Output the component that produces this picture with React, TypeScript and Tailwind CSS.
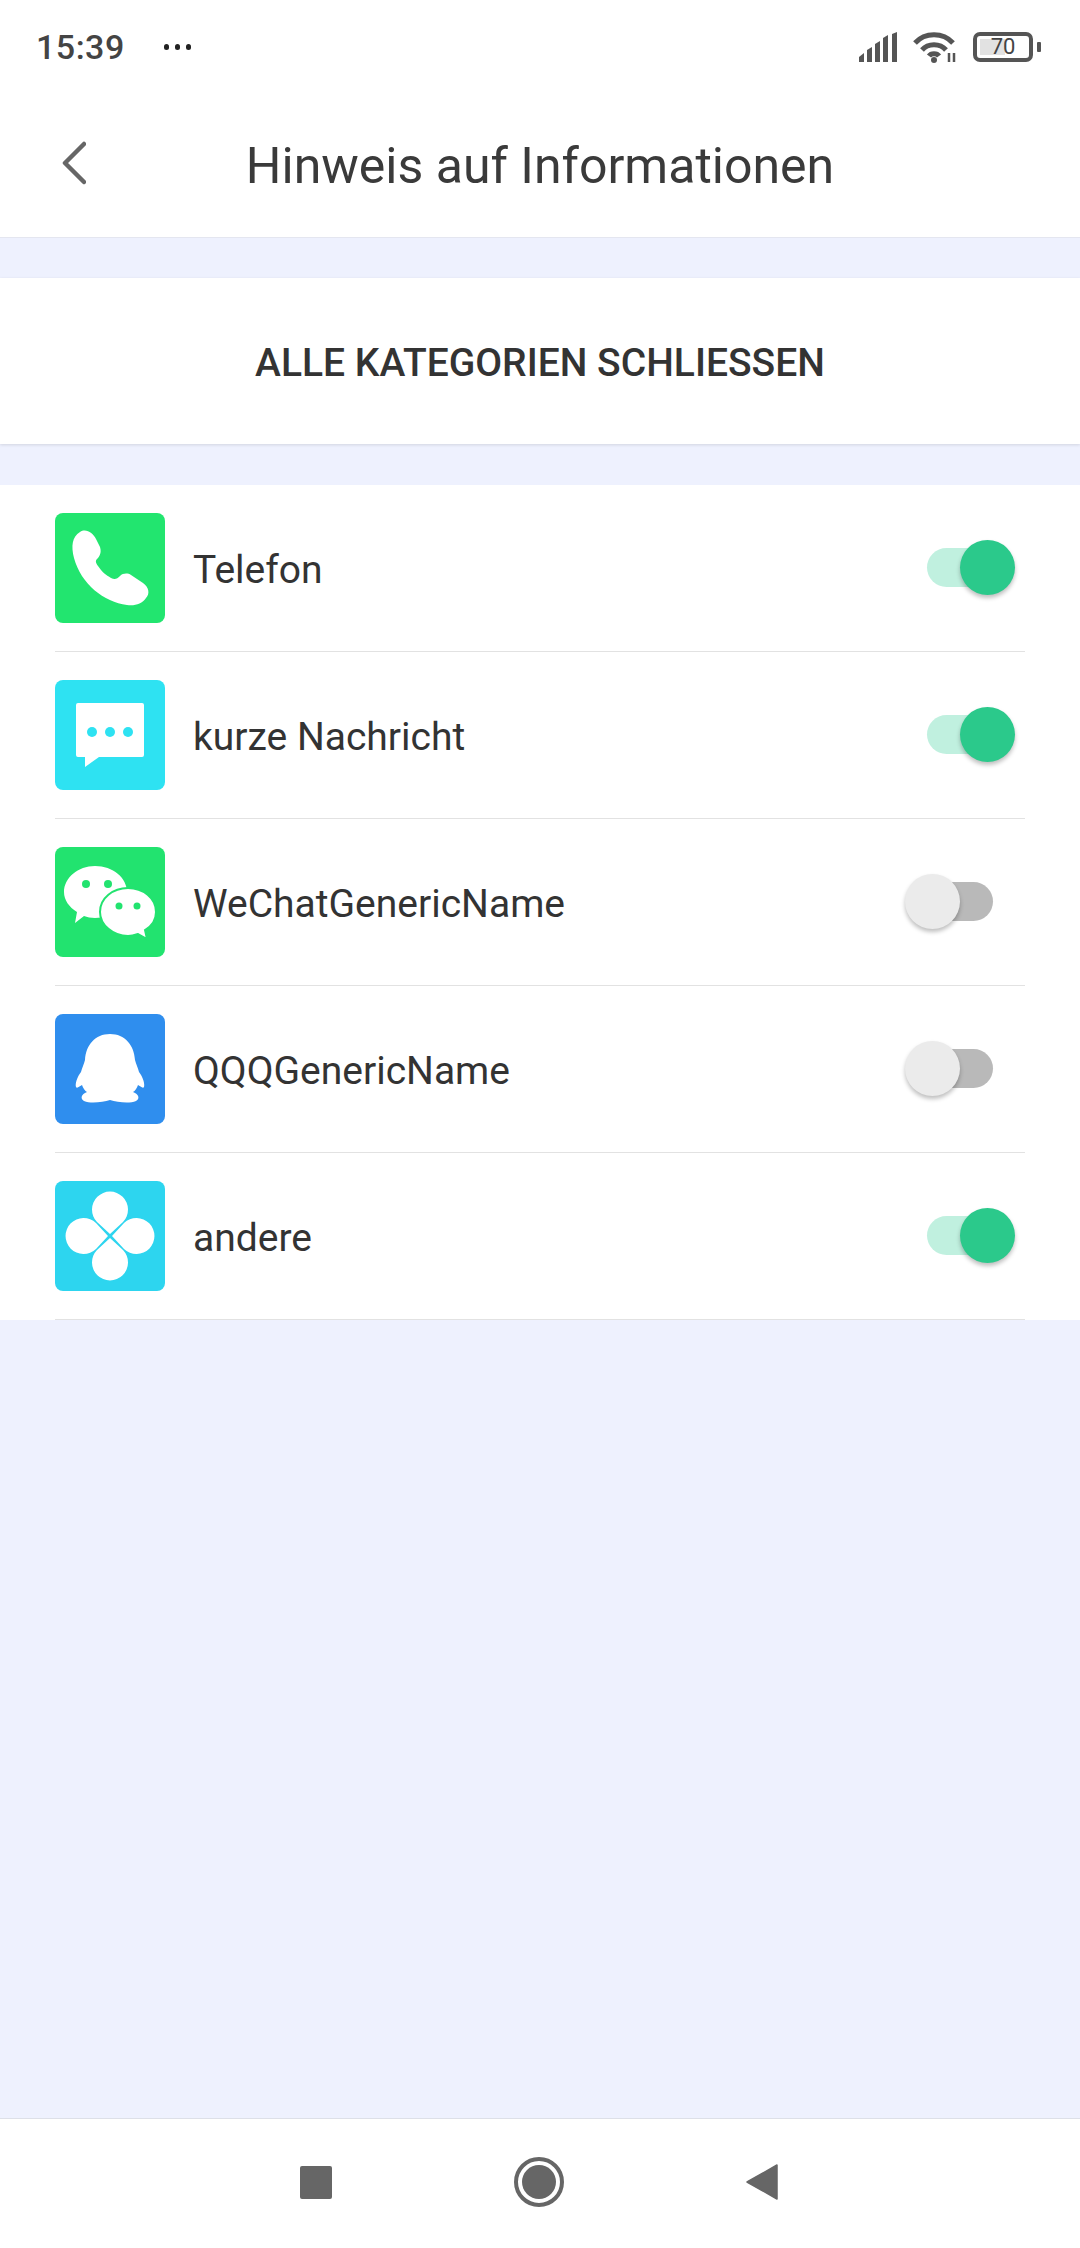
import React from 'react';

const rows = [
  { name: 'Telefon', on: true, bg: 'bg-[#22E56F]', icon: 'phone' },
  { name: 'kurze Nachricht', on: true, bg: 'bg-[#2EE2F2]', icon: 'message' },
  { name: 'WeChatGenericName', on: false, bg: 'bg-[#22E36F]', icon: 'wechat' },
  { name: 'QQQGenericName', on: false, bg: 'bg-[#2F8EEE]', icon: 'qq' },
  { name: 'andere', on: true, bg: 'bg-[#2DD5EF]', icon: 'other' },
];

const Glyph = ({ icon }: { icon: string }) => {
  if (icon === 'phone') {
    return (
      <svg viewBox="0 0 110 110" className="w-full h-full" fill="#fff">
        <path d="M25 19C31 15 38 20 41 26L45 34C47 40 44 44 42 46C40 48 41 50 43 53C47 59 51 62 56 65C60 67 62 66 65 63C68 60 73 60 76 62L88 70C94 74 95 81 91 85C87 91 80 93 72 92C49 89 26 71 19 45C16 33 17 24 25 19Z" />
      </svg>
    );
  }
  if (icon === 'message') {
    return (
      <svg viewBox="0 0 110 110" className="w-full h-full">
        <path fill="#fff" d="M23 23H87Q89 23 89 25V75Q89 77 87 77H44L30 87V77H23Q21 77 21 75V25Q21 23 23 23Z" />
        <circle cx="37" cy="52" r="5" fill="#2EE2F2" />
        <circle cx="55" cy="52" r="5" fill="#2EE2F2" />
        <circle cx="73" cy="52" r="5" fill="#2EE2F2" />
      </svg>
    );
  }
  if (icon === 'wechat') {
    return (
      <svg viewBox="0 0 110 110" className="w-full h-full">
        <path fill="#fff" d="M40 19C58 19 72 31 72 45C72 60 58 71 40 71C36 71 32 70 29 69L20 76L22 65C14 60 9 53 9 45C9 31 23 19 40 19Z" />
        <circle cx="31" cy="37" r="4" fill="#22E36F" />
        <circle cx="53" cy="37" r="4" fill="#22E36F" />
        <path fill="#fff" stroke="#22E36F" strokeWidth="2" d="M73 41C88 41 101 51 101 65C101 73 97 79 90 83L92 92L83 87C80 88 76 89 73 89C58 89 45 78 45 65C45 51 58 41 73 41Z" />
        <circle cx="64" cy="59" r="3.5" fill="#22E36F" />
        <circle cx="82" cy="59" r="3.5" fill="#22E36F" />
      </svg>
    );
  }
  if (icon === 'qq') {
    return (
      <svg viewBox="0 0 110 110" className="w-full h-full" fill="#fff">
        <path d="M55 20C70 20 79 31 80 46C81 50 83 54 84 58C88 63 90 70 89 73C88 75 85 72 83 71C82 74 80 77 78 78C84 80 85 85 81 87C74 90 62 88 55 86C48 88 36 90 29 87C25 85 26 80 32 78C30 77 28 74 27 71C25 72 22 75 21 73C20 70 22 63 26 58C27 54 29 50 30 46C31 31 40 20 55 20Z" />
      </svg>
    );
  }
  return (
    <svg viewBox="0 0 110 110" className="w-full h-full" fill="#fff">
      <path d="M55 53L42 41A18 18 0 1 1 68 41Z" />
      <path d="M55 57L42 69A18 18 0 1 0 68 69Z" />
      <path d="M53 55L41 42A18 18 0 1 0 41 68Z" />
      <path d="M57 55L69 42A18 18 0 1 1 69 68Z" />
    </svg>
  );
};

const Toggle = ({ on }: { on: boolean }) => (
  <div className={`relative w-[66px] h-[39px] rounded-full mr-[32px] -mt-[1px] ${on ? 'bg-[#C0F0DF]' : 'bg-[#B9B9B9]'}`}>
    {on ? (
      <div className="absolute top-[-8px] left-[33px] w-[55px] h-[55px] rounded-full bg-[#2BC98B] shadow-[0_3px_4px_rgba(0,0,0,0.25)]" />
    ) : (
      <div className="absolute top-[-8px] left-[-22px] w-[55px] h-[55px] rounded-full bg-[#EBEBEB] shadow-[0_3px_4px_rgba(0,0,0,0.25)]" />
    )}
  </div>
);

export default function App() {
  return (
    <div className="w-[1080px] h-[2248px] flex flex-col bg-[#EEF1FE] text-[#333333] font-['Roboto',sans-serif] overflow-hidden">
      {/* status bar + title */}
      <div className="bg-white border-b border-[#E4E6F0]">
        <div className="h-[94px] flex items-center pl-[36px] pr-[39px]">
          <span className="text-[34px] font-medium text-[#444444] tracking-[0.5px]">15:39</span>
          <div className="flex gap-[6px] ml-[39px]">
            <span className="w-[5px] h-[6px] rounded-full bg-[#222222]" />
            <span className="w-[5px] h-[6px] rounded-full bg-[#222222]" />
            <span className="w-[5px] h-[6px] rounded-full bg-[#222222]" />
          </div>
          <div className="ml-auto flex items-center">
            <svg viewBox="0 0 40 30" className="w-[40px] h-[30px]" fill="#555555">
              <path d="M0 30V25L5 21V30Z" />
              <path d="M8 30V18L13 15V30Z" />
              <path d="M16 30V12L21 9V30Z" />
              <path d="M24 30V6L29 3V30Z" />
              <path d="M33 30V2L38 0V30Z" />
            </svg>
            <svg viewBox="0 0 46 32" className="w-[46px] h-[32px] ml-[14px]" fill="none" stroke="#555555" strokeWidth="5">
              <path d="M2 12C12 1 30 1 40 12" />
              <path d="M9 19C15 12 27 12 33 19" />
              <path d="M16 25C18 22 24 22 26 25" />
              <circle cx="21" cy="29" r="3" fill="#555555" stroke="none" />
              <path d="M36 22V31M41 22V31" strokeWidth="2.5" />
            </svg>
            <div className="relative ml-[14px] w-[60px] h-[30px] rounded-[7px] border-[4px] border-[#555555] flex items-center justify-center">
              <div className="absolute left-[3px] top-[3px] bottom-[3px] w-[25px] bg-[#E2E2E2]" />
              <span className="relative text-[22px] leading-none text-[#444444]">70</span>
            </div>
            <div className="w-[4px] h-[10px] ml-[4px] rounded-[1px] bg-[#555555]" />
          </div>
        </div>
        <div className="relative h-[143px] flex items-center justify-center">
          <svg viewBox="0 0 24 44" className="absolute left-[62px] top-[47px] w-[24px] h-[44px]" fill="none" stroke="#666666" strokeWidth="4.5" strokeLinecap="round" strokeLinejoin="round">
            <path d="M22 3L3 22L22 41" />
          </svg>
          <span className="text-[50px] leading-none text-[#3A3A3A]">Hinweis auf Informationen</span>
        </div>
      </div>

      {/* close all */}
      <div className="mt-[40px] h-[166px] pt-[5px] bg-white flex items-center justify-center shadow-[0_1px_3px_rgba(0,0,0,0.12)]">
        <span className="text-[39px] font-medium text-[#333333]">ALLE KATEGORIEN SCHLIESSEN</span>
      </div>

      {/* categories */}
      <div className="mt-[41px] bg-white px-[55px]">
        {rows.map((r) => (
          <div key={r.name} className="h-[167px] flex items-center border-b border-[#E2E2E2]">
            <div className={`w-[110px] h-[110px] rounded-[8px] shrink-0 ${r.bg}`}>
              <Glyph icon={r.icon} />
            </div>
            <span className="ml-[28px] mt-[5px] text-[39px] text-[#333333]">{r.name}</span>
            <div className="ml-auto">
              <Toggle on={r.on} />
            </div>
          </div>
        ))}
      </div>

      {/* nav bar */}
      <div className="mt-auto h-[130px] bg-white border-t border-[#DDE0E8] flex items-center justify-center">
        <div className="flex items-center gap-[182px] -mt-[3px] -ml-[2px]">
          <div className="w-[32px] h-[33px] rounded-[2px] bg-[#666666]" />
          <svg viewBox="0 0 50 50" className="w-[50px] h-[50px]">
            <circle cx="25" cy="25" r="23" fill="none" stroke="#666666" strokeWidth="4" />
            <circle cx="25" cy="25" r="17" fill="#666666" />
          </svg>
          <svg viewBox="0 0 32 36" className="w-[32px] h-[36px]" fill="#666666">
            <path d="M31 1V35L1 18Z" stroke="#666666" strokeWidth="1.5" strokeLinejoin="round" />
          </svg>
        </div>
      </div>
    </div>
  );
}
